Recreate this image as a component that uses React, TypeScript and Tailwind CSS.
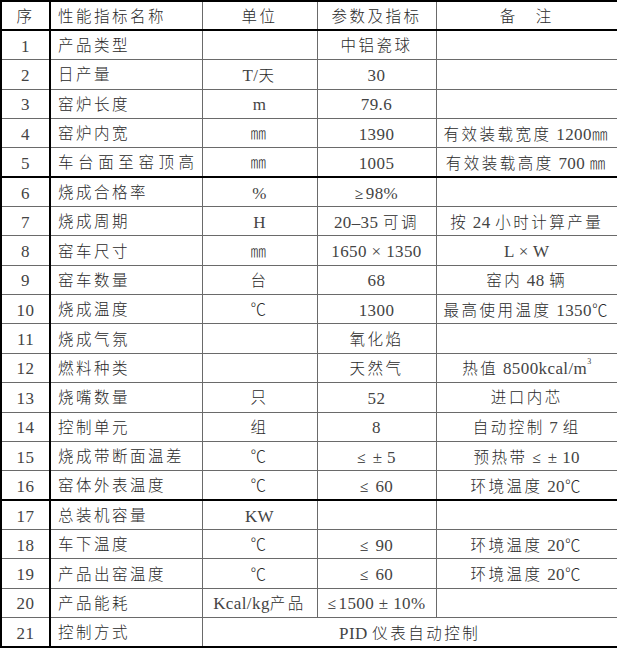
import React from "react";

type Row = {
  no: string;
  name: string;
  unit?: string;
  value?: string;
  note?: string;
  span?: string; // PID row spans unit/value/note
  wide?: boolean;
  thickTop?: boolean;
};

const rows: Row[] = [
  { no: "1", name: "产品类型", value: "中铝瓷球" },
  { no: "2", name: "日产量", unit: "T/天", value: "30" },
  { no: "3", name: "窑炉长度", unit: "m", value: "79.6" },
  { no: "4", name: "窑炉内宽", unit: "㎜", value: "1390", note: "有效装载宽度 1200㎜" },
  { no: "5", name: "车台面至窑顶高", unit: "㎜", value: "1005", note: "有效装载高度 700 ㎜", wide: true },
  { no: "6", name: "烧成合格率", unit: "%", value: "≥98%", thickTop: true },
  { no: "7", name: "烧成周期", unit: "H", value: "20–35 可调", note: "按 24 小时计算产量" },
  { no: "8", name: "窑车尺寸", unit: "㎜", value: "1650 × 1350", note: "L × W" },
  { no: "9", name: "窑车数量", unit: "台", value: "68", note: "窑内 48 辆" },
  { no: "10", name: "烧成温度", unit: "℃", value: "1300", note: "最高使用温度 1350℃" },
  { no: "11", name: "烧成气氛", value: "氧化焰" },
  { no: "12", name: "燃料种类", value: "天然气", note: "heat" },
  { no: "13", name: "烧嘴数量", unit: "只", value: "52", note: "进口内芯" },
  { no: "14", name: "控制单元", unit: "组", value: "8", note: "自动控制 7 组" },
  { no: "15", name: "烧成带断面温差", unit: "℃", value: "≤ ± 5", note: "预热带 ≤ ± 10" },
  { no: "16", name: "窑体外表温度", unit: "℃", value: "≤ 60", note: "环境温度 20℃" },
  { no: "17", name: "总装机容量", unit: "KW", thickTop: true },
  { no: "18", name: "车下温度", unit: "℃", value: "≤ 90", note: "环境温度 20℃" },
  { no: "19", name: "产品出窑温度", unit: "℃", value: "≤ 60", note: "环境温度 20℃" },
  { no: "20", name: "产品能耗", unit: "Kcal/kg产品", value: "≤1500 ± 10%" },
  { no: "21", name: "控制方式", span: "PID 仪表自动控制" },
];

// latin runs get the serif face, CJK runs get Noto at a light weight
function Txt({ s }: { s?: string }) {
  if (!s) return null;
  const latin = /^[\x20-\x7E±×–]+$/;
  const parts = s.split(/([\x20-\x7E±×–]+)/).filter(Boolean);
  return (
    <>
      {parts.map((p, i) =>
        latin.test(p) ? (
          <span key={i} className="text-[17px] tracking-[0.4px] text-[#444]">
            {p}
          </span>
        ) : (
          <span key={i} className="text-[15.5px] tracking-[2.5px] font-light">
            {p}
          </span>
        )
      )}
    </>
  );
}

const cell = "border border-[#6a6a6a] pt-[2px] leading-none whitespace-nowrap";

export default function App() {
  return (
    <div className="w-[617px] h-[648px] bg-white text-[#2a2a2a] font-['Liberation_Serif','Noto_Sans_CJK_SC',serif]">
      <table className="w-[617px] h-[648px] table-fixed border-collapse border-2 border-black">
        <colgroup>
          <col className="w-[49px]" />
          <col className="w-[152px]" />
          <col className="w-[115px]" />
          <col className="w-[119px]" />
          <col className="w-[182px]" />
        </colgroup>
        <tbody>
          <tr className="h-[29px]">
            <td className={`${cell} text-center border-r-2 border-r-black border-b-2 border-b-black`}>
              <Txt s="序" />
            </td>
            <td className={`${cell} pl-[7px] border-b-2 border-b-black`}>
              <Txt s="性能指标名称" />
            </td>
            <td className={`${cell} text-center border-b-2 border-b-black`}>
              <Txt s="单位" />
            </td>
            <td className={`${cell} text-center border-b-2 border-b-black`}>
              <Txt s="参数及指标" />
            </td>
            <td className={`${cell} text-center border-b-2 border-b-black`}>
              <Txt s="备　注" />
            </td>
          </tr>
          {rows.map((r) => {
            const top = r.thickTop ? "border-t-2 border-t-black" : "";
            return (
              <tr key={r.no} className="h-[29px]">
                <td className={`${cell} ${top} text-center border-r-2 border-r-black`}>
                  <Txt s={r.no} />
                </td>
                <td className={`${cell} ${top} pl-[7px]`}>
                  {r.wide ? (
                    <span className="text-[15.5px] tracking-[4.6px] font-light">{r.name}</span>
                  ) : (
                    <Txt s={r.name} />
                  )}
                </td>
                {r.span ? (
                  <td colSpan={3} className={`${cell} ${top} text-center`}>
                    <Txt s={r.span} />
                  </td>
                ) : (
                  <>
                    <td className={`${cell} ${top} text-center`}>
                      <Txt s={r.unit} />
                    </td>
                    <td className={`${cell} ${top} text-center`}>
                      <Txt s={r.value} />
                    </td>
                    <td className={`${cell} ${top} text-center`}>
                      {r.note === "heat" ? (
                        <>
                          <Txt s="热值 8500kcal/m" />
                          <sup className="text-[8px] align-[6px] text-[#444]">3</sup>
                        </>
                      ) : (
                        <Txt s={r.note} />
                      )}
                    </td>
                  </>
                )}
              </tr>
            );
          })}
        </tbody>
      </table>
    </div>
  );
}
